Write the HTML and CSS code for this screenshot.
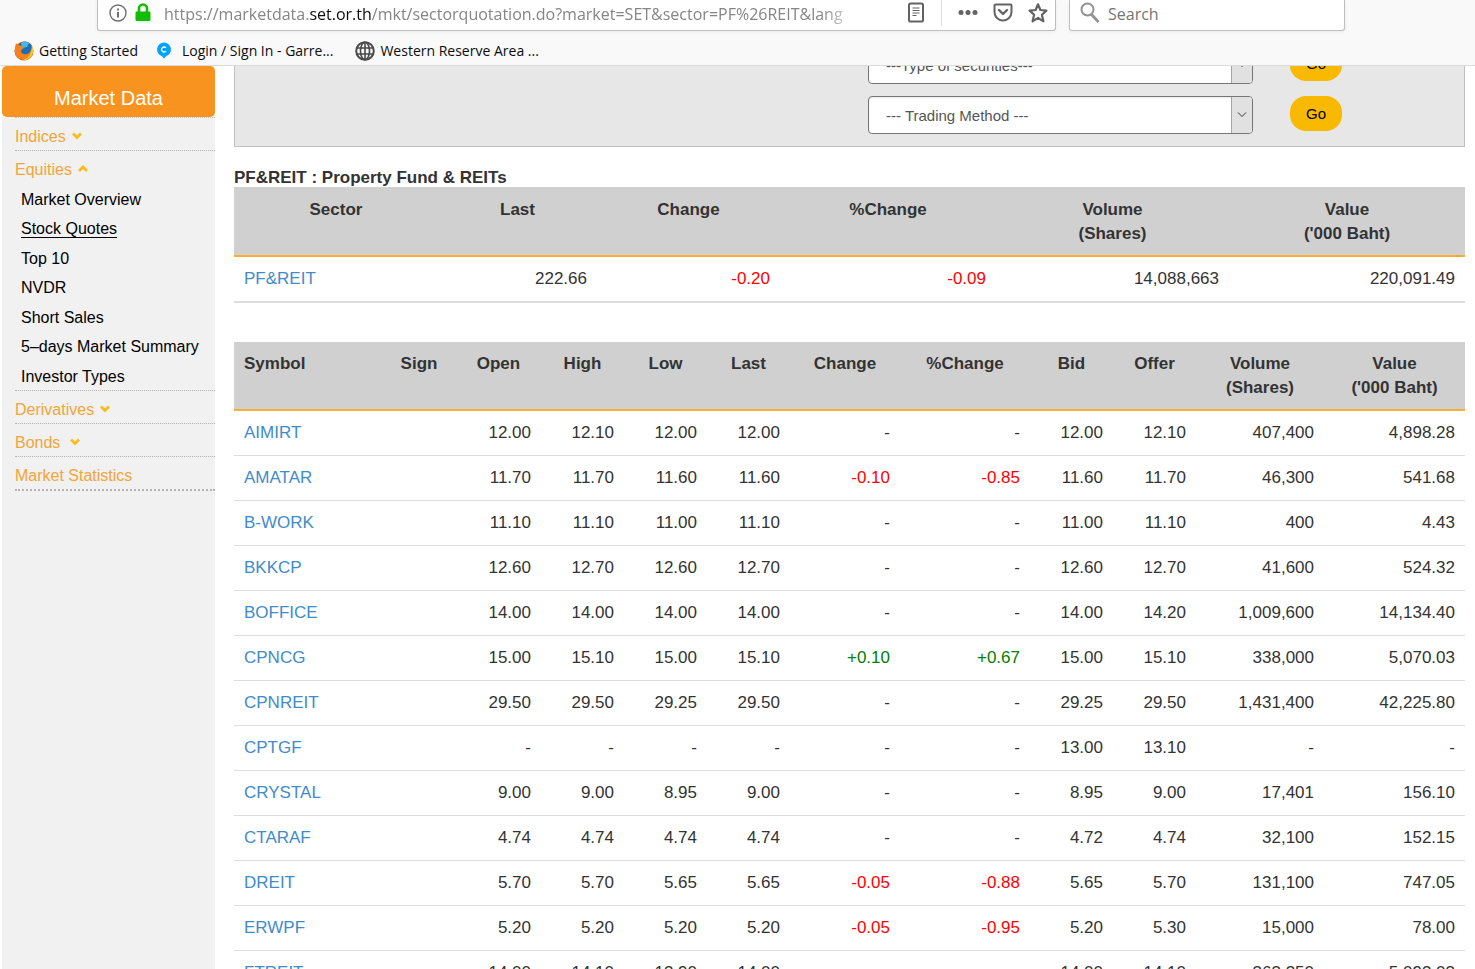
FILE: index.html
```html
<!DOCTYPE html>
<html lang="en">
<head>
    <meta charset="UTF-8">
    <title>PF&amp;REIT : Property Fund &amp; REITs</title>
    <link rel="stylesheet" href="styles.css">
</head>
<body>
    <!-- Browser toolbar -->
    <header class="browser">
        <div class="nav-bar">
            <div class="url-box">
                <svg class="icon-info" width="20" height="20" viewBox="0 0 20 20" fill="none" stroke="#6f6f6f">
                    <circle cx="10" cy="10" r="8" stroke-width="1.4"/>
                    <path d="M10 9v5.5" stroke-width="2"/>
                    <path d="M10 5.5v2" stroke-width="2"/>
                </svg>
                <svg class="icon-lock" width="16" height="20" viewBox="0 0 16 20">
                    <path d="M4 10V5.5a4 4 0 0 1 8 0V10" fill="none" stroke="#12bc00" stroke-width="2.6"/>
                    <rect x="0.5" y="8.5" width="15" height="9.5" rx="1.2" fill="#12bc00"/>
                </svg>
                <div class="url" role="textbox" contenteditable="true" spellcheck="false" aria-label="Address">https://marketdata.<span class="host">set.or.th</span>/mkt/sectorquotation.do?market=SET&amp;sector=PF%26REIT&amp;lang</div>
                <button class="icon-button reader" aria-label="Reader view">
                    <svg width="18" height="22" viewBox="0 0 18 22" fill="none" stroke="#636363">
                        <rect x="2" y="1.5" width="14" height="18" rx="1.6" stroke-width="2"/>
                        <path d="M5.5 6h7M5.5 8.5h7M5.5 11h7M5.5 13.5h4" stroke-width="1.2"/>
                    </svg>
                </button>
                <span class="separator"></span>
                <button class="icon-button" aria-label="Page actions">
                    <svg width="22" height="22" viewBox="0 0 22 22" fill="#636363">
                        <circle cx="4" cy="10.5" r="2.5"/>
                        <circle cx="11" cy="10.5" r="2.5"/>
                        <circle cx="18" cy="10.5" r="2.5"/>
                    </svg>
                </button>
                <button class="icon-button" aria-label="Save to Pocket">
                    <svg width="22" height="22" viewBox="0 0 22 22" fill="none" stroke="#636363" stroke-width="2" stroke-linejoin="round">
                        <path d="M3.500 2.500h15q1 0 1 1V10a8.500 8.500 0 0 1-17 0V3.500q0-1 1-1z"/>
                        <path d="M7 8l4 4 4-4" stroke-width="2.400" stroke-linecap="round"/>
                    </svg>
                </button>
                <button class="icon-button" aria-label="Bookmark this page">
                    <svg width="22" height="22" viewBox="0 0 22 22" fill="none" stroke="#636363" stroke-width="2.200" stroke-linejoin="round">
                        <path d="M11 2.300l2.400 5.700 6 .6-4.500 4.200 1.500 6.500-5.400-3.500-5.400 3.500 1.500-6.500-4.500-4.200 6-.6z"/>
                    </svg>
                </button>
            </div>
            <div class="search-box">
                <svg width="22" height="22" viewBox="0 0 22 22" fill="none" stroke="#929292">
                    <circle cx="8.500" cy="7.500" r="6" stroke-width="2"/>
                    <path d="M12.500 12.500l7 7.500" stroke-width="2.800"/>
                </svg>
                <input type="text" placeholder="Search" aria-label="Search">
            </div>
        </div>
        <nav class="bookmarks">
            <a href="#">
                <svg width="22" height="22" viewBox="0 0 22 22">
                    <circle cx="11" cy="11" r="9.500" fill="#e66000"/>
                    <circle cx="12" cy="9" r="7.500" fill="#1c6fb5"/>
                    <path d="M8 3q4-3 8 0l-2 4-5 1z" fill="#47b8e0"/>
                    <path d="M3 3q1 2 4 2.500Q10 6 11 8q-3 1-3 4 2 3 6 2 3-1 4-4 1 6-3 8-6 3-11-1Q0 12 3 3z" fill="#f58220"/>
                    <path d="M19 5q3 6-.500 11-4 5-9 4 7-2 8.500-8z" fill="#ffcb2d"/>
                </svg>
                Getting Started
            </a>
            <a href="#" class="garrett">
                <svg width="18" height="20" viewBox="0 0 18 20">
                    <path d="M9 1.500a7 7 0 0 1 2 13.700L9 17.500l-2-2.300A7 7 0 0 1 9 1.500z" fill="#00a4ff"/>
                    <path d="M11 6.900a2.500 2.500 0 1 0 0 3.200" fill="none" stroke="#fff" stroke-width="1.400"/>
                </svg>
                Login / Sign In - Garre...
            </a>
            <a href="#">
                <svg width="22" height="22" viewBox="0 0 22 22" fill="none" stroke="#4a4a4a" stroke-width="1.600">
                    <circle cx="11" cy="11" r="8.800" stroke-width="2"/>
                    <ellipse cx="11" cy="11" rx="4.500" ry="8.800"/>
                    <path d="M11 2v18M2.500 8h17M2.500 14h17"/>
                </svg>
                Western Reserve Area ...
            </a>
        </nav>
    </header>

    <div class="page">
        <!-- Left menu -->
        <aside class="sidebar">
            <h2>Market Data</h2>
            <ul class="menu">
                <li><a href="#">Indices</a><svg width="10" height="8" viewBox="0 0 10 8"><path d="M1 1.500l4 4 4-4"/></svg></li>
                <li>
                    <a href="#">Equities</a><svg width="10" height="8" viewBox="0 0 10 8"><path d="M1 6l4-4 4 4"/></svg>
                    <ul class="submenu">
                        <li><a href="#">Market Overview</a></li>
                        <li><a href="#" class="active">Stock Quotes</a></li>
                        <li><a href="#">Top 10</a></li>
                        <li><a href="#">NVDR</a></li>
                        <li><a href="#">Short Sales</a></li>
                        <li><a href="#">5–days Market Summary</a></li>
                        <li><a href="#">Investor Types</a></li>
                    </ul>
                </li>
                <li><a href="#">Derivatives</a><svg width="10" height="8" viewBox="0 0 10 8"><path d="M1 1.500l4 4 4-4"/></svg></li>
                <li><a href="#">Bonds</a><svg class="wide" width="10" height="8" viewBox="0 0 10 8"><path d="M1 1.500l4 4 4-4"/></svg></li>
                <li><a href="#">Market Statistics</a></li>
            </ul>
        </aside>

        <main class="content">
            <form class="filters">
                <div class="filter-row">
                    <div class="select-wrap">
                        <select aria-label="Type of securities">
                            <option>---Type of securities---</option>
                        </select>
                        <span class="arrow"><svg width="10" height="6" viewBox="0 0 10 6"><path d="M1 .5l4 4 4-4"/></svg></span>
                    </div>
                    <button type="button" class="go">Go</button>
                </div>
                <div class="filter-row">
                    <div class="select-wrap">
                        <select aria-label="Trading Method">
                            <option>--- Trading Method ---</option>
                        </select>
                        <span class="arrow"><svg width="10" height="6" viewBox="0 0 10 6"><path d="M1 .5l4 4 4-4"/></svg></span>
                    </div>
                    <button type="button" class="go">Go</button>
                </div>
            </form>

            <h1>PF&amp;REIT : Property Fund &amp; REITs</h1>

            <table class="sector-table">
                <thead>
                    <tr>
                        <th class="s-name">Sector</th>
                        <th class="s-last">Last</th>
                        <th class="s-change">Change</th>
                        <th class="s-percent">%Change</th>
                        <th class="s-volume">Volume<br>(Shares)</th>
                        <th class="s-value">Value<br>('000 Baht)</th>
                    </tr>
                </thead>
                <tbody>
                    <tr><td><a href="#">PF&amp;REIT</a></td><td>222.66</td><td class="down">-0.20</td><td class="down">-0.09</td><td>14,088,663</td><td>220,091.49</td></tr>
                </tbody>
            </table>

            <table class="quote-table">
                <thead>
                    <tr>
                        <th class="q-symbol">Symbol</th>
                        <th class="q-sign">Sign</th>
                        <th class="q-open">Open</th>
                        <th class="q-price">High</th>
                        <th class="q-price">Low</th>
                        <th class="q-price">Last</th>
                        <th class="q-change">Change</th>
                        <th class="q-percent">%Change</th>
                        <th class="q-price">Bid</th>
                        <th class="q-price">Offer</th>
                        <th class="q-volume">Volume<br>(Shares)</th>
                        <th class="q-value">Value<br>('000 Baht)</th>
                    </tr>
                </thead>
                <tbody>
                    <tr><td><a href="#">AIMIRT</a></td><td></td><td>12.00</td><td>12.10</td><td>12.00</td><td>12.00</td><td>-</td><td>-</td><td>12.00</td><td>12.10</td><td>407,400</td><td>4,898.28</td></tr>
                    <tr><td><a href="#">AMATAR</a></td><td></td><td>11.70</td><td>11.70</td><td>11.60</td><td>11.60</td><td class="down">-0.10</td><td class="down">-0.85</td><td>11.60</td><td>11.70</td><td>46,300</td><td>541.68</td></tr>
                    <tr><td><a href="#">B-WORK</a></td><td></td><td>11.10</td><td>11.10</td><td>11.00</td><td>11.10</td><td>-</td><td>-</td><td>11.00</td><td>11.10</td><td>400</td><td>4.43</td></tr>
                    <tr><td><a href="#">BKKCP</a></td><td></td><td>12.60</td><td>12.70</td><td>12.60</td><td>12.70</td><td>-</td><td>-</td><td>12.60</td><td>12.70</td><td>41,600</td><td>524.32</td></tr>
                    <tr><td><a href="#">BOFFICE</a></td><td></td><td>14.00</td><td>14.00</td><td>14.00</td><td>14.00</td><td>-</td><td>-</td><td>14.00</td><td>14.20</td><td>1,009,600</td><td>14,134.40</td></tr>
                    <tr><td><a href="#">CPNCG</a></td><td></td><td>15.00</td><td>15.10</td><td>15.00</td><td>15.10</td><td class="up">+0.10</td><td class="up">+0.67</td><td>15.00</td><td>15.10</td><td>338,000</td><td>5,070.03</td></tr>
                    <tr><td><a href="#">CPNREIT</a></td><td></td><td>29.50</td><td>29.50</td><td>29.25</td><td>29.50</td><td>-</td><td>-</td><td>29.25</td><td>29.50</td><td>1,431,400</td><td>42,225.80</td></tr>
                    <tr><td><a href="#">CPTGF</a></td><td></td><td>-</td><td>-</td><td>-</td><td>-</td><td>-</td><td>-</td><td>13.00</td><td>13.10</td><td>-</td><td>-</td></tr>
                    <tr><td><a href="#">CRYSTAL</a></td><td></td><td>9.00</td><td>9.00</td><td>8.95</td><td>9.00</td><td>-</td><td>-</td><td>8.95</td><td>9.00</td><td>17,401</td><td>156.10</td></tr>
                    <tr><td><a href="#">CTARAF</a></td><td></td><td>4.74</td><td>4.74</td><td>4.74</td><td>4.74</td><td>-</td><td>-</td><td>4.72</td><td>4.74</td><td>32,100</td><td>152.15</td></tr>
                    <tr><td><a href="#">DREIT</a></td><td></td><td>5.70</td><td>5.70</td><td>5.65</td><td>5.65</td><td class="down">-0.05</td><td class="down">-0.88</td><td>5.65</td><td>5.70</td><td>131,100</td><td>747.05</td></tr>
                    <tr><td><a href="#">ERWPF</a></td><td></td><td>5.20</td><td>5.20</td><td>5.20</td><td>5.20</td><td class="down">-0.05</td><td class="down">-0.95</td><td>5.20</td><td>5.30</td><td>15,000</td><td>78.00</td></tr>
                    <tr><td><a href="#">FTREIT</a></td><td></td><td>14.00</td><td>14.10</td><td>13.90</td><td>14.00</td><td>-</td><td>-</td><td>14.00</td><td>14.10</td><td>363,350</td><td>5,093.03</td></tr>
                </tbody>
            </table>
        </main>
    </div>
</body>
</html>
```
FILE: styles.css
```css
* {
    box-sizing: border-box;
}
body {
    margin: 0;
    height: 100vh;
    display: flex;
    flex-direction: column;
    overflow: hidden;
    background-color: #fff;
    color: #333;
    font-family: "Liberation Sans", Arial, sans-serif;
    font-size: 17px;
    line-height: 24px;
}
a {
    color: #428bca;
    text-decoration: none;
}
ul {
    list-style: none;
    margin: 0;
    padding: 0;
}
button, input, select {
    font-family: inherit;
}

/* Browser toolbar */
.browser {
    position: relative;
    z-index: 1;
    flex: none;
    background-color: #f9f9fa;
    border-bottom: 1px solid #dcdcdc;
    font-family: "Open Sans", "Noto Sans", sans-serif;
}
.nav-bar {
    display: flex;
    gap: 13px;
    padding: 0 130px 0 97px;
}
.url-box, .search-box {
    display: flex;
    align-items: center;
    height: 31px;
    padding-bottom: 4px;
    background-color: #fff;
    border: 1px solid #bebebe;
    border-top: none;
    border-radius: 0 0 3px 3px;
    box-shadow: 0 1px 4px rgba(0, 0, 0, 0.06);
}
.url-box {
    flex: 1;
    min-width: 0;
    padding-left: 10px;
    padding-right: 6px;
}
.icon-info {
    flex: none;
    margin-right: 7px;
}
.icon-lock {
    flex: none;
    margin-right: 13px;
}
.url {
    flex: 1;
    min-width: 0;
    margin-right: 46px;
    padding-top: 2px;
    overflow: hidden;
    white-space: nowrap;
    color: #858585;
    font-size: 16px;
    line-height: 24px;
    outline: none;
    -webkit-mask-image: linear-gradient(to left, transparent, #000 40px);
    mask-image: linear-gradient(to left, transparent, #000 40px);
}
.url .host {
    color: #0c0c0d;
}
.icon-button {
    flex: none;
    display: flex;
    padding: 0;
    margin-left: 13px;
    border: none;
    background: none;
    cursor: pointer;
}
.icon-button.reader {
    margin: 0 16px 0 0;
}
.separator {
    width: 1px;
    height: 26px;
    margin-right: 2px;
    background-color: #e0e0e0;
}
.search-box {
    width: 276px;
    padding-left: 9px;
}
.search-box input {
    flex: 1;
    min-width: 0;
    margin-left: 7px;
    padding: 2px 0 0;
    border: none;
    outline: none;
    font-size: 16px;
}
.search-box input::placeholder {
    color: #757575;
}
.bookmarks {
    display: flex;
    gap: 17px;
    height: 34px;
    padding: 0 13px;
}
.bookmarks a {
    display: flex;
    align-items: center;
    gap: 4px;
    padding-top: 5px;
    color: #0c0c0d;
    font-size: 14px;
    white-space: nowrap;
}
.bookmarks .garrett {
    gap: 9px;
    margin-right: 4px;
}

/* Page */
.page {
    flex: 1;
    min-height: 0;
    display: flex;
    padding: 0 10px 0 2px;
}
.sidebar {
    flex: none;
    width: 213px;
    background-color: #f1f1f1;
    font-size: 16px;
}
.sidebar h2 {
    margin: 0;
    padding: 18px 0 5px;
    border-radius: 5px;
    background-color: #f7931e;
    color: #fff;
    font-size: 20px;
    font-weight: normal;
    line-height: 28px;
    text-align: center;
}
.menu {
    margin-left: 13px;
    border-top: 1px dotted #c4c4c4;
    line-height: 27px;
}
.menu > li {
    padding-top: 5px;
    border-bottom: 1px dotted #b4b4b4;
}
.menu > li:last-child {
    border-bottom-width: 2px;
}
.menu > li > a {
    color: #f2a53a;
}
.menu svg {
    margin-left: 6px;
    vertical-align: 2px;
    fill: none;
    stroke: #f9bd1b;
    stroke-width: 2.8;
}
.menu svg.wide {
    margin-left: 10px;
}
.submenu {
    display: grid;
    grid-auto-rows: 1fr;
    height: 206px;
    margin: 3px 0 -2px 6px;
}
.submenu a {
    color: #000;
}
.submenu .active {
    border-bottom: 1px solid #000;
}

.content {
    flex: 1;
    min-width: 0;
    margin: -33px 0 0 19px; /* scrolled a little under the toolbar */
}
.filters {
    display: flex;
    flex-direction: column;
    gap: 12px;
    padding: 12px 122px 12px 0;
    border: 1px solid #c0c0c0;
    background-color: #e7e7e7;
}
.filter-row {
    display: flex;
    justify-content: flex-end;
    align-items: flex-start;
    gap: 37px;
}
.select-wrap {
    position: relative;
    width: 385px;
}
.select-wrap select {
    display: block;
    width: 100%;
    height: 38px;
    padding: 0 17px;
    border: 1px solid #767676;
    border-radius: 4px;
    background-color: #fff;
    box-shadow: inset 0 1px 2px rgba(0, 0, 0, 0.1);
    color: #555;
    font-size: 15px;
    appearance: none;
}
.arrow {
    position: absolute;
    top: 1px;
    right: 1px;
    bottom: 1px;
    width: 21px;
    display: flex;
    align-items: center;
    justify-content: center;
    border-left: 1px solid #a5a5a5;
    border-radius: 0 3px 3px 0;
    background-color: #e1e1e1;
    pointer-events: none;
}
.arrow svg {
    fill: none;
    stroke: #333;
}
.go {
    width: 52px;
    height: 35px;
    padding: 0;
    border: none;
    border-radius: 16px;
    background-color: #f9b900;
    color: #000;
    font-size: 15px;
    cursor: pointer;
}
h1 {
    margin: 22px 0 0;
    font-size: 17px;
    line-height: 18px;
}

/* Tables */
table {
    width: 100%;
    table-layout: fixed;
    border-collapse: separate;
    border-spacing: 0;
}
th {
    padding: 11px 0 9px;
    border-bottom: 2px solid #fbb034;
    background-color: #d0d0d0;
    vertical-align: top;
}
td {
    padding: 10px;
    border-bottom: 1px solid #ddd;
    text-align: right;
    white-space: nowrap;
}
td:first-child {
    text-align: left;
}
.down {
    color: #f00;
}
.up {
    color: #008000;
}
.sector-table td {
    border-bottom-width: 2px;
}
.s-name { width: 204px; }
.s-last { width: 159px; }
.s-change { width: 183px; }
.s-percent { width: 216px; }
.s-volume { width: 233px; }
.s-value { width: 236px; }

.quote-table {
    margin-top: 39px;
}
.quote-table th {
    padding: 10px 0 9px;
}
.quote-table .q-symbol {
    width: 148px;
    padding-left: 10px;
    text-align: left;
}
.q-sign { width: 74px; }
.q-open { width: 85px; }
.q-price { width: 83px; }
.q-change { width: 110px; }
.q-percent { width: 130px; }
.q-volume { width: 128px; }
.q-value { width: 141px; }
```
